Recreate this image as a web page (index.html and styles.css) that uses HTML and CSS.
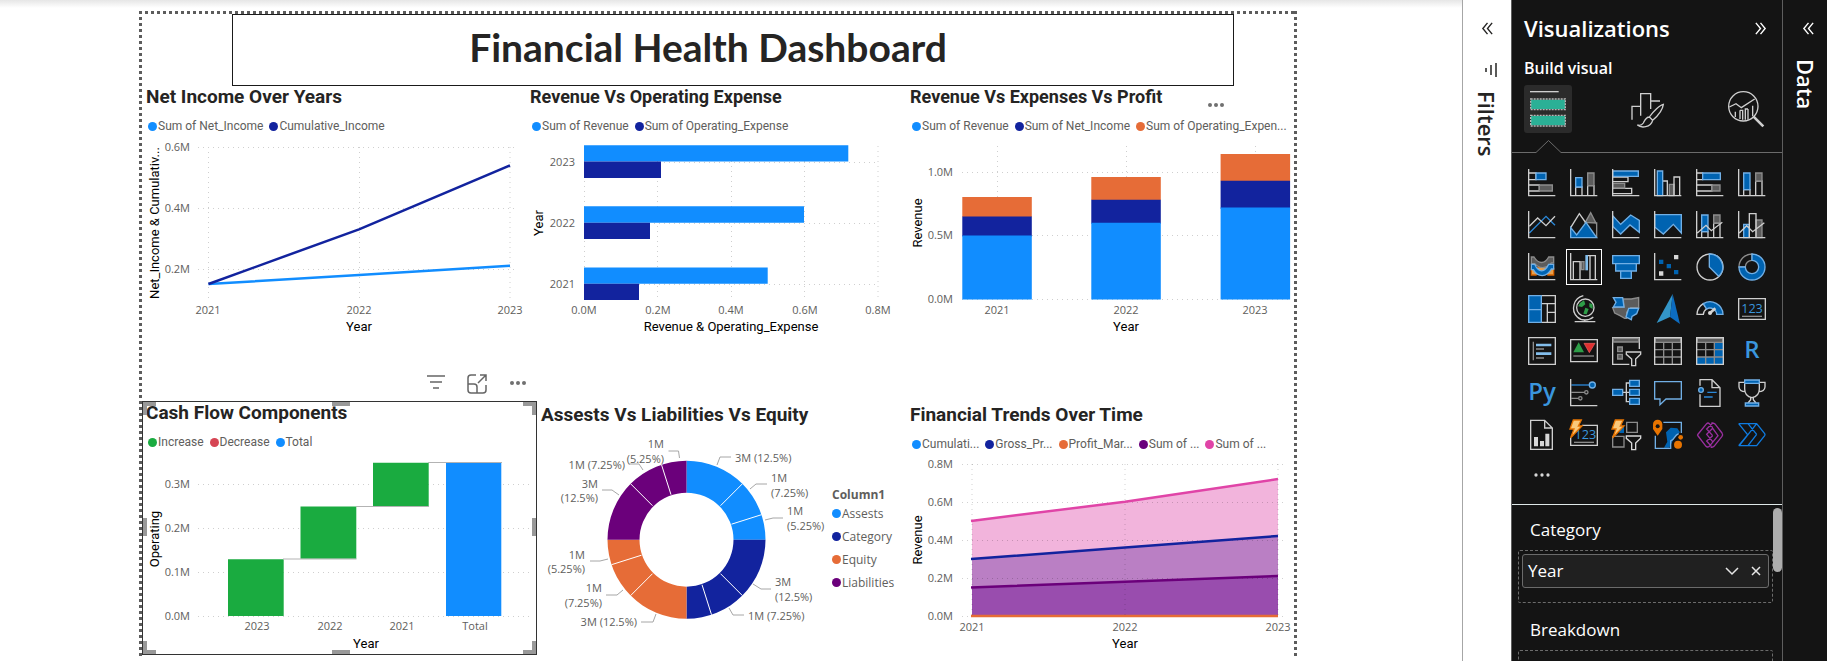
FILE: index.html
```html
<!DOCTYPE html>
<html lang="en">
<head>
<meta charset="utf-8">
<title>Financial Health Dashboard</title>
<link rel="stylesheet" href="styles.css">
</head>
<body>
<div class="app">
  <main class="workspace">
    <div class="report">
      <h1 class="report-title">Financial Health Dashboard</h1>

      <div class="row row-top">
        <section class="visual">
          <h2>Net Income Over Years</h2>
          <ul class="legend">
            <li><i class="dot blue"></i>Sum of Net_Income</li>
            <li><i class="dot navy"></i>Cumulative_Income</li>
          </ul>
          <svg class="chart" viewBox="146 136 380 200" role="img" aria-label="Net income line chart">
            <path class="grid" d="M198 147.5H515M198 208.5H515M198 269.5H515M208.5 147V301M359.5 147V301M510 147V301"/>
            <g class="tick end"><text x="190" y="151">0.6M</text><text x="190" y="212">0.4M</text><text x="190" y="273">0.2M</text></g>
            <g class="tick mid"><text x="208" y="314">2021</text><text x="359" y="314">2022</text><text x="510" y="314">2023</text></g>
            <path class="line s-blue" d="M208.500 284L359 275L510 265.700"/>
            <path class="line s-navy" d="M208.500 284L359 229.300L510 165.500"/>
            <text class="axis" x="359" y="331">Year</text>
            <text class="axis" transform="translate(159 223) rotate(-90)">Net_Income &amp; Cumulativ...</text>
          </svg>
        </section>

        <section class="visual compact">
          <h2>Revenue Vs Operating Expense</h2>
          <ul class="legend">
            <li><i class="dot blue"></i>Sum of Revenue</li>
            <li><i class="dot navy"></i>Sum of Operating_Expense</li>
          </ul>
          <svg class="chart" viewBox="530 136 376 200" role="img" aria-label="Revenue and operating expense bar chart">
            <path class="grid" d="M584 162.500H878M584 223.500H878M584 284.500H878M584.500 146V301M657.500 146V301M731.500 146V301M804.500 146V301M878 146V301"/>
            <g class="f-blue"><path d="M584 145.300H848.300V161.500H584zM584 206.300H804V222.700H584zM584 267.500H767.700V283.700H584z"/></g>
            <g class="f-navy"><path d="M584 161.500H661V178H584zM584 222.700H650V239H584zM584 283.700H639V300H584z"/></g>
            <g class="tick end"><text x="575" y="166">2023</text><text x="575" y="227">2022</text><text x="575" y="288">2021</text></g>
            <g class="tick mid"><text x="584" y="314">0.0M</text><text x="658" y="314">0.2M</text><text x="731" y="314">0.4M</text><text x="805" y="314">0.6M</text><text x="878" y="314">0.8M</text></g>
            <text class="axis" x="731" y="331">Revenue &amp; Operating_Expense</text>
            <text class="axis" transform="translate(543 223) rotate(-90)">Year</text>
          </svg>
        </section>

        <section class="visual compact">
          <h2>Revenue Vs Expenses Vs Profit</h2>
          <button class="more-overlay" aria-label="More options"><svg class="tool" viewBox="0 0 24 24"><g class="tool-dots"><circle cx="6" cy="12" r="2"/><circle cx="12" cy="12" r="2"/><circle cx="18" cy="12" r="2"/></g></svg></button>
          <ul class="legend">
            <li><i class="dot blue"></i>Sum of Revenue</li>
            <li><i class="dot navy"></i>Sum of Net_Income</li>
            <li><i class="dot orange"></i>Sum of Operating_Expen...</li>
          </ul>
          <svg class="chart" viewBox="910 136 384 200" role="img" aria-label="Stacked column chart">
            <path class="grid" d="M962 172.500H1290M962 235.500H1290M962 299.500H1290M997.500 146V300M1126.500 146V300M1255.500 146V300"/>
            <path class="f-orange" d="M962.300 197h69.500v20h-69.500zM1091.300 177h69.500v23h-69.500zM1220.600 154h69.500v27h-69.500z"/>
            <path class="f-navy" d="M962.300 216.500h69.500v20h-69.500zM1091.300 199.700h69.500v24h-69.500zM1220.600 180.700h69.500v28h-69.500z"/>
            <path class="f-blue" d="M962.300 235.500h69.500v64h-69.500zM1091.300 222.700h69.500v76.800h-69.500zM1220.600 207.500h69.500v92h-69.500z"/>
            <g class="tick end"><text x="953" y="176">1.0M</text><text x="953" y="239">0.5M</text><text x="953" y="303">0.0M</text></g>
            <g class="tick mid"><text x="997" y="314">2021</text><text x="1126" y="314">2022</text><text x="1255" y="314">2023</text></g>
            <text class="axis" x="1126" y="331">Year</text>
            <text class="axis" transform="translate(922 223) rotate(-90)">Revenue</text>
          </svg>
        </section>
      </div>

      <div class="visual-tools">
        <button aria-label="Filters on this visual"><svg class="tool" viewBox="0 0 24 24"><path d="M3 4h18M6 10h12M9 16h6"/></svg></button>
        <button aria-label="Focus mode"><svg class="tool" viewBox="0 0 24 24"><path d="M11 3H6a3 3 0 0 0-3 3v12a3 3 0 0 0 3 3h12a3 3 0 0 0 3-3v-5M3 12h6a3 3 0 0 1 3 3v6M13 11l8-8M15 3h6v6"/></svg></button>
        <button aria-label="More options"><svg class="tool" viewBox="0 0 24 24"><g class="tool-dots"><circle cx="6" cy="11" r="2"/><circle cx="12" cy="11" r="2"/><circle cx="18" cy="11" r="2"/></g></svg></button>
      </div>

      <div class="row row-bottom">
        <section class="visual selected">
          <i class="handle tl"></i><i class="handle tm"></i><i class="handle tr"></i>
          <i class="handle ml"></i><i class="handle mr"></i>
          <i class="handle bl"></i><i class="handle bm"></i><i class="handle br"></i>
          <h2>Cash Flow Components</h2>
          <ul class="legend">
            <li><i class="dot green"></i>Increase</li>
            <li><i class="dot red"></i>Decrease</li>
            <li><i class="dot blue"></i>Total</li>
          </ul>
          <svg class="chart" viewBox="146 452 390 202" role="img" aria-label="Cash flow waterfall chart">
            <path class="grid" d="M198 484.500H533M198 528.500H533M198 572.500H533M198 616.500H533"/>
            <path class="f-green" d="M228 559.300h55.700V616H228zM300.500 506.500h55.800v52.300h-55.800zM373 462.700h55.700V506H373z"/>
            <path class="f-blue" d="M446 462.700h55.300V616H446z"/>
            <path class="connector" d="M283 559H356.500M356 506.500H429M428 462.500H502"/>
            <g class="tick end"><text x="190" y="488">0.3M</text><text x="190" y="532">0.2M</text><text x="190" y="576">0.1M</text><text x="190" y="620">0.0M</text></g>
            <g class="tick mid"><text x="257" y="630">2023</text><text x="330" y="630">2022</text><text x="402" y="630">2021</text><text x="475" y="630">Total</text></g>
            <text class="axis" x="366" y="648">Year</text>
            <text class="axis" transform="translate(159 539) rotate(-90)">Operating</text>
          </svg>
        </section>

        <section class="visual lower">
          <h2>Assests Vs Liabilities Vs Equity</h2>
          <div class="donut-body">
            <svg class="chart" viewBox="541 426 290 229" role="img" aria-label="Assets, liabilities and equity donut chart">
              <g class="ring" transform="translate(686.500 539.700)">
                <path class="f-blue" d="M0-79A79 79 0 0 1 79 0H47A47 47 0 0 0 0-47z"/>
                <path class="f-navy" d="M79 0A79 79 0 0 1 0 79V47A47 47 0 0 0 47 0z"/>
                <path class="f-orange" d="M0 79A79 79 0 0 1-79 0H-47A47 47 0 0 0 0 47z"/>
                <path class="f-purple" d="M-79 0A79 79 0 0 1 0-79V-47A47 47 0 0 0-47 0z"/>
                <path class="split" d="M34-34L56-56M45-15.500L75-25M34 34L56 56M15.500 45L25 75M-34 34L-56 56M-45 15.500L-75 25M-34-34L-56-56M-15.500-45L-25-75"/>
              </g>
              <path class="leader" d="M717 465l3-8h11M750 489l6-5h11M765 520l8-2h10M753 584l8 5h10M729 608l4 7h11M656 614l-3 8h-12M623 590l-6 5h-11M608 559l-8 2h-10M619 495l-7-5h-10M643 470l-4-6h-10M679.500 458l-1-7h-10"/>
              <g class="tick">
                <text x="735" y="462">3M (12.5%)</text>
                <text x="771" y="482">1M</text><text x="771" y="497">(7.25%)</text>
                <text x="787" y="515">1M</text><text x="787" y="530">(5.25%)</text>
                <text x="775" y="586">3M</text><text x="775" y="601">(12.5%)</text>
                <text x="748" y="620">1M (7.25%)</text>
              </g>
              <g class="tick end">
                <text x="664" y="448">1M</text><text x="664" y="463">(5.25%)</text>
                <text x="625" y="469">1M (7.25%)</text>
                <text x="598" y="488">3M</text><text x="598" y="502">(12.5%)</text>
                <text x="585" y="559">1M</text><text x="585" y="573">(5.25%)</text>
                <text x="602" y="592">1M</text><text x="602" y="607">(7.25%)</text>
                <text x="637" y="626">3M (12.5%)</text>
              </g>
            </svg>
            <div class="side-legend">
              <h3>Column1</h3>
              <ul>
                <li><i class="dot blue"></i>Assests</li>
                <li><i class="dot navy"></i>Category</li>
                <li><i class="dot orange"></i>Equity</li>
                <li><i class="dot purple"></i>Liabilities</li>
              </ul>
            </div>
          </div>
        </section>

        <section class="visual lower">
          <h2>Financial Trends Over Time</h2>
          <ul class="legend">
            <li><i class="dot blue"></i>Cumulati...</li>
            <li><i class="dot navy"></i>Gross_Pr...</li>
            <li><i class="dot orange"></i>Profit_Mar...</li>
            <li><i class="dot purple"></i>Sum of ...</li>
            <li><i class="dot pink"></i>Sum of ...</li>
          </ul>
          <svg class="chart" viewBox="910 454 384 200" role="img" aria-label="Financial trends area chart">
            <path class="area-pink" d="M972 521L1125 501.700L1278 479V616H972z"/>
            <path class="area-mid" d="M972 559L1125 547.500L1278 536V616H972z"/>
            <path class="area-low" d="M972 587.500L1125 581.700L1278 576V616H972z"/>
            <path class="grid over" d="M962 464.500H1283M962 502.500H1283M962 540.500H1283M962 578.500H1283M962 616.500H1283M972 464V616M1125 464V616M1278 464V616"/>
            <path class="line s-pink" d="M971 521L1125 501.700L1278 479"/>
            <path class="line s-navy" d="M971 559L1125 547.500L1278 536"/>
            <path class="line s-purple" d="M971 587.500L1125 581.700L1278 576"/>
            <path class="line s-orange" d="M971 616H1278"/>
            <g class="tick end"><text x="953" y="468">0.8M</text><text x="953" y="506">0.6M</text><text x="953" y="544">0.4M</text><text x="953" y="582">0.2M</text><text x="953" y="620">0.0M</text></g>
            <g class="tick mid"><text x="972" y="631">2021</text><text x="1125" y="631">2022</text><text x="1278" y="631">2023</text></g>
            <text class="axis" x="1125" y="648">Year</text>
            <text class="axis" transform="translate(922 540) rotate(-90)">Revenue</text>
          </svg>
        </section>
      </div>
    </div>
  </main>

  <aside class="rail filters">
    <button aria-label="Expand filters"><svg class="chev" viewBox="0 0 14 14"><path d="M7 1L2 7l5 6M12 1L7 7l5 6"/></svg></button>
    <svg class="rail-icon" viewBox="0 0 14 14"><path d="M12 0v14M7 2v10M2 5v4"/></svg>
    <h2>Filters</h2>
  </aside>

  <aside class="viz">
    <header class="viz-head">
      <h2>Visualizations</h2>
      <button aria-label="Collapse visualizations"><svg class="chev" viewBox="0 0 14 14"><path d="M2 1l5 6-5 6M7 1l5 6-5 6"/></svg></button>
    </header>
    <h3 class="viz-sub">Build visual</h3>
    <nav class="tabs">
      <button class="tab active" aria-label="Build visual"><svg viewBox="0 0 144 144"><path class="w" d="M18 20H104"/><path class="teal" d="M21 44H123V72H21zM21 93H123V121H21z"/><path class="dash" d="M20 42H124V74H20zM20 91H124V123H20z"/></svg></button>
      <button class="tab" aria-label="Format visual"><svg viewBox="0 0 144 144"><path class="w" d="M27 104V64H53M53 90V26H83V72M83 48H111M53 64V92M83 48V70"/><path class="w" d="M121 58C111 60 91 78 79 96L89 106C105 92 119 74 121 58zM79 96C69 96 65 106 61 114C57 120 49 122 43 120C55 130 83 128 89 106"/></svg></button>
      <button class="tab" aria-label="Add further analyses"><svg viewBox="0 0 144 144"><circle class="w" cx="64" cy="64" r="44"/><path class="w" d="M22 66L42 56L58 68L98 42M40 80V96M54 76V102M54 76H62V104M78 72V104M78 72H70V104M92 62V94"/><path class="w thick" d="M94 94L124 124"/></svg></button>
    </nav>
    <svg class="notch" viewBox="0 0 270 14" preserveAspectRatio="xMinYMin meet"><path d="M0 12.500H24L36.500 0.500L49 12.500H900"/></svg>

    <div class="gallery">
      <button aria-label="Stacked bar chart"><svg viewBox="0 0 84 84"><path class="w" d="M2 12H24V32H2M2 48H34V66H2"/><path class="b" d="M24 12H54V32H24z"/><path class="g" d="M34 48H73V66H34z"/><path class="w" d="M2 0V80H82"/></svg></button>
      <button aria-label="Stacked column chart"><svg viewBox="0 0 84 84"><path class="w" d="M17 80V54H36V80M53 80V50H72V80"/><path class="b" d="M17 26H36V54H17z"/><path class="g" d="M53 12H72V50H53z"/><path class="w" d="M2 0V80H82"/></svg></button>
      <button aria-label="Clustered bar chart"><svg viewBox="0 0 84 84"><path class="w" d="M2 24H48V38H2M2 58H59V74H2"/><path class="g" d="M2 43H38V57H2z"/><path class="b" d="M2 6H79V22H2z"/><path class="w" d="M2 0V80H82"/></svg></button>
      <button aria-label="Clustered column chart"><svg viewBox="0 0 84 84"><path class="g" d="M46 46H60V80H46z"/><path class="w" d="M26 36H40V80M60 80V24H77V80"/><path class="b" d="M10 6H26V80H10z"/><path class="w" d="M2 0V80H82"/></svg></button>
      <button aria-label="100% stacked bar chart"><svg viewBox="0 0 84 84"><path class="w" d="M2 12H20V32H2M2 48H48V66H2"/><path class="b" d="M20 12H73V32H20z"/><path class="g" d="M48 48H72V66H48z"/><path class="w" d="M2 0V80H82"/></svg></button>
      <button aria-label="100% stacked column chart"><svg viewBox="0 0 84 84"><path class="w" d="M17 80V62H36V80M53 80V36H72V80"/><path class="b" d="M17 12H36V62H17z"/><path class="g" d="M53 12H72V36H53z"/><path class="w" d="M2 0V80H82"/></svg></button>

      <button aria-label="Line chart"><svg viewBox="0 0 84 84"><path class="bl" d="M4 66L54 16L81 43"/><path class="w" d="M4 46L29 21L54 44L81 16"/><path class="w" d="M2 0V80H82"/></svg></button>
      <button aria-label="Area chart"><svg viewBox="0 0 84 84"><path class="g" d="M46 34L62 5L80 40V80V50 36z"/><path class="w" d="M2 50L28 8L48 36"/><path class="b" d="M2 80V50L20 72L48 34L80 80z"/></svg></button>
      <button aria-label="Stacked area chart"><svg viewBox="0 0 84 84"><path class="b" d="M2 14L26 40L56 12L82 28V64L54 42L26 69L2 46z"/><path class="w" d="M2 0V80H82"/></svg></button>
      <button aria-label="100% stacked area chart"><svg viewBox="0 0 84 84"><path class="b" d="M2 11H82V66L58 40L28 69L2 48z"/><path class="w" d="M2 0V80H82"/></svg></button>
      <button aria-label="Line and stacked column chart"><svg viewBox="0 0 84 84"><path class="w" d="M17 80V62H36V80M53 80V36H72V80"/><path class="b" d="M17 12H36V62H17z"/><path class="g" d="M53 12H72V36H53z"/><path class="w" d="M2 0V80H82M4 66L30 43L46 59L79 34"/></svg></button>
      <button aria-label="Line and clustered column chart"><svg viewBox="0 0 84 84"><path class="b" d="M17 40H34V80H17z"/><path class="g" d="M54 27H72V80H54z"/><path class="w" d="M34 80V8H54V80M2 0V80H82M4 66L26 44L44 62L79 35"/></svg></button>

      <button aria-label="Ribbon chart"><svg viewBox="0 0 84 84"><path class="o" d="M10 46H24C34 38 52 38 60 46H77V66H60C50 56 34 56 24 66H10z"/><path class="g" d="M10 12H18C32 34 50 34 62 12H77V30H70C54 50 32 46 20 32H10z"/><path class="b" d="M10 34H20C32 60 50 60 62 34H77V48H70C56 74 30 74 16 50H10z"/><path class="w" d="M2 0V80H82"/></svg></button>
      <button class="picked" aria-label="Waterfall chart" aria-pressed="true"><svg viewBox="0 0 84 84"><path class="g" d="M34 26H42V50H34z"/><path class="w" d="M10 80V26H30V80M60 80V8H76V80"/><path class="lb" d="M46 6H54V52H46z"/><path class="w" d="M2 0V80H82M54 8H60"/></svg></button>
      <button aria-label="Funnel"><svg viewBox="0 0 84 84"><path class="b" d="M2 8H82V32H2zM11 32H73V54H11zM26 54H58V76H26z"/></svg></button>
      <button aria-label="Scatter chart"><svg viewBox="0 0 84 84"><path class="ws" d="M60 6h13v13H60zM15 55h13v13H15z"/><path class="bs" d="M15 20h13v13H15zM38 33h13v13H38zM60 51h13v13H60z"/><path class="w" d="M2 0V80H82"/></svg></button>
      <button aria-label="Pie chart"><svg viewBox="0 0 84 84"><circle class="w" cx="42" cy="42" r="39"/><path class="b" d="M40 42V3A39 39 0 0 1 68 70z"/></svg></button>
      <button aria-label="Donut chart"><svg viewBox="0 0 84 84"><path class="gl" d="M3 42A39 39 0 0 1 42 3V22A20 20 0 0 0 22 42z"/><path class="b" d="M42 3A39 39 0 1 1 3 42H22A20 20 0 1 0 42 22z"/></svg></button>

      <button aria-label="Treemap"><svg viewBox="0 0 84 84"><path class="w" d="M40 2H82V82H40zM40 26H82M58 26V82M58 52H82"/><path class="b" d="M2 2H40V44H2zM2 44H40V82H2z"/></svg></button>
      <button aria-label="Map"><svg viewBox="0 0 84 84"><path class="gr" d="M30 24L42 16L46 28L36 36L24 34zM46 38L56 42L50 58L40 56zM58 24L68 28V42L58 36z"/><circle class="w" cx="46" cy="38" r="26"/><path class="w" d="M40 2A38 38 0 0 0 22 66C34 78 56 78 70 66M44 74V80M14 80H76"/></svg></button>
      <button aria-label="Filled map"><svg viewBox="0 0 84 84"><path class="g" d="M34 12H58L80 8V38H56L44 52V70H38L24 62L8 54L2 38L36 36z"/><path class="b" d="M4 8H32L36 36H4L12 22zM50 40H80L74 56L60 64L58 74L42 66z"/></svg></button>
      <button aria-label="Azure map"><svg viewBox="0 0 84 84"><path class="az1" d="M56-3L8 84L48 66z"/><path class="az2" d="M56-3L78 87L48 66z"/></svg></button>
      <button aria-label="Gauge"><svg viewBox="0 0 84 84"><path class="w" d="M3 58A39 39 0 0 1 22 26L32 42A20 20 0 0 0 22 58z"/><path class="b" d="M22 26A39 39 0 0 1 81 58H62A20 20 0 0 0 32 42z"/><path class="w thick" d="M42 54L58 40"/><circle class="ws" cx="42" cy="54" r="6"/></svg></button>
      <button aria-label="Card"><svg viewBox="0 0 84 84"><path class="w" d="M2 11H82V73H2z"/><path class="gl" d="M12 64H72"/><text class="n" x="42" y="54">123</text></svg></button>

      <button aria-label="Multi-row card"><svg viewBox="0 0 84 84"><path class="w" d="M2 2H82V82H2z"/><path class="gl" d="M16 14V70M24 36H48M24 63H48"/><path class="lb" d="M24 20H70V28H24zM24 46H70V54H24z"/></svg></button>
      <button aria-label="KPI"><svg viewBox="0 0 84 84"><path class="w" d="M2 8H82V74H2z"/><path class="gr" d="M10 46L26 16L42 46z"/><path class="rd" d="M42 19H75L58 47z"/><path class="gl" d="M10 57H72"/></svg></button>
      <button aria-label="Slicer"><svg viewBox="0 0 84 84"><path class="w" d="M52 82H2V2H82V36"/><path class="g" d="M4 4H80V15H4zM17 30H31V44H17zM17 52H31V66H17z"/><path class="w" d="M43 45H86V52L71 66V86H59V66L43 52z"/></svg></button>
      <button aria-label="Table"><svg viewBox="0 0 84 84"><path class="g" d="M4 4H80V16H4z"/><path class="gl" d="M2 38H82M2 60H82M29 16V82M55 16V82"/><path class="w" d="M2 2H82V82H2z"/></svg></button>
      <button aria-label="Matrix"><svg viewBox="0 0 84 84"><path class="g" d="M4 4H80V16H4z"/><path class="bs" d="M55 18H82V82H2V60H55z"/><path class="gl" d="M2 38H82M2 60H82M29 16V82M55 16V82"/><path class="w" d="M2 2H82V82H2z"/></svg></button>
      <button class="word" aria-label="R script visual">R</button>

      <button class="word" aria-label="Python visual">Py</button>
      <button aria-label="Key influencers"><svg viewBox="0 0 84 84"><path class="bl" d="M4 18H58"/><circle class="b" cx="67" cy="18" r="9"/><path class="gl" d="M4 40H44M4 58H25"/><circle class="gl" cx="49" cy="40" r="5"/><circle class="gl" cx="31" cy="58" r="5"/><path class="w" d="M2 0V80H82"/></svg></button>
      <button aria-label="Decomposition tree"><svg viewBox="0 0 84 84"><path class="w" d="M32 40H54M54 12H43V68H54"/><path class="b" d="M2 31H32V49H2zM53 4H82V22H53zM53 31H82V49H53zM53 58H82V76H53z"/></svg></button>
      <button aria-label="Q&amp;A"><svg viewBox="0 0 84 84"><path class="lbl" d="M2 8H82V60H36L18 77V60H2z"/></svg></button>
      <button aria-label="Narrative"><svg viewBox="0 0 84 84"><path class="w" d="M12 20V2H48L72 26V82H12V46M48 2V26H72"/><circle class="b" cx="15" cy="33" r="7"/><path class="bl" d="M34 40H62M24 54H50"/></svg></button>
      <button aria-label="Goals"><svg viewBox="0 0 84 84"><path class="w" d="M20 8V30C20 48 32 54 42 56C52 54 64 48 64 30V8M20 10H3V24C4 34 12 38 22 38M64 10H81V24C80 34 72 38 62 38M38 56V62L30 72M46 56V62L54 72"/><path class="b" d="M20 3H64V13H20zM22 72H62V81H22z"/></svg></button>

      <button aria-label="Paginated report"><svg viewBox="0 0 84 84"><path class="w" d="M8-2H50L73 21V85H8zM50-2V21H73"/><path class="ws" d="M18 48H30V76H18zM36 60H48V76H36zM52 38H64V76H52z"/></svg></button>
      <button aria-label="New card"><svg viewBox="0 0 84 84"><path class="w" d="M36 13H82V73H2V50"/><path class="gl" d="M12 64H72"/><text class="n" x="46" y="54">123</text><path class="bolt" d="M10-3H34L25 15H36L2 50L12 24H0z"/></svg></button>
      <button aria-label="New slicer"><svg viewBox="0 0 84 84"><path class="gl" d="M44 4H76V34H44zM2 46H36V78H2z"/><path class="bs" d="M22 14H36V36H22z"/><path class="bolt" d="M10-3H34L25 15H36L2 50L12 24H0z"/><path class="cut" d="M43 45H86V52L71 66V86H59V66L43 52z"/></svg></button>
      <button aria-label="ArcGIS map"><svg viewBox="0 0 84 84"><path class="bs" d="M36 34L50 20L70 22L78 34L64 46L56 60L46 80H30L40 62z"/><path class="lbl" d="M28 4H82V36M4 44V82H52M74 38C60 44 62 56 50 60V80"/><path class="os" d="M11-4A14 14 0 0 1 25 10V24L11 44L-3 24V10A14 14 0 0 1 11-4z"/><circle class="hole" cx="11" cy="16" r="6"/><circle class="os" cx="72" cy="71" r="12"/><circle class="os" cx="80" cy="49" r="7"/></svg></button>
      <button aria-label="Power Apps"><svg viewBox="0 0 84 84"><path class="pu" d="M4 42L32 8Q36 4 40 8L50 20M4 42L30 76Q34 80 40 76L66 44L50 22L32 40L50 62M50 6L32 24L50 44M46 6H50Q54 6 58 10L78 36Q82 42 78 46L54 76Q50 80 44 78M50 44L32 60L46 76"/></svg></button>
      <button aria-label="Power Automate"><svg viewBox="0 0 84 84"><path class="pa" d="M2 8H56L80 38Q82 41 80 44L56 74H4L56 8M2 8L28 40M2 74L30 40M30 74L56 40M30 8L56 40"/></svg></button>
      <button aria-label="Get more visuals"><svg viewBox="0 0 84 84"><g class="ws"><circle cx="24" cy="36" r="5"/><circle cx="42" cy="36" r="5"/><circle cx="60" cy="36" r="5"/></g></svg></button>
    </div>

    <div class="wells">
      <h4>Category</h4>
      <div class="well">
        <div class="field">
          <span>Year</span>
          <button aria-label="Field options"><svg viewBox="0 0 14 14"><path d="M1 4l6 6 6-6"/></svg></button>
          <button aria-label="Remove field"><svg viewBox="0 0 14 14"><path d="M3 3l8 8M11 3l-8 8"/></svg></button>
        </div>
      </div>
      <h4>Breakdown</h4>
      <div class="well"></div>
      <div class="thumb"></div>
    </div>
  </aside>

  <aside class="rail data">
    <button aria-label="Expand data"><svg class="chev" viewBox="0 0 14 14"><path d="M7 1L2 7l5 6M12 1L7 7l5 6"/></svg></button>
    <h2>Data</h2>
  </aside>
</div>
</body>
</html>
```
FILE: styles.css
```css
* { box-sizing: border-box; }
body { margin: 0; font-family: "Open Sans", "Noto Sans", sans-serif; background: #fff; color: #252423; }
h1, h2, h3, h4, ul { margin: 0; padding: 0; }
ul { list-style: none; }
button { background: none; border: 0; padding: 0; margin: 0; color: inherit; font: inherit; display: flex; align-items: center; justify-content: center; }
svg { display: block; overflow: visible; }

.app { display: flex; height: 100vh; overflow: hidden; }
.workspace { flex: 1; min-width: 0; padding: 11px 165px 0 139px; background: linear-gradient(#e6e6e6, #fff 8px); }

/* Report page, outlined with square dots */
.report {
  padding: 3px 3px 2px;
  background:
    repeating-linear-gradient(90deg, #5c5c5c 0 3px, transparent 3px 6px) top / 100% 3px no-repeat,
    repeating-linear-gradient(#5c5c5c 0 3px, transparent 3px 6px) left / 3px 100% no-repeat,
    repeating-linear-gradient(#5c5c5c 0 3px, transparent 3px 6px) right / 3px 100% no-repeat;
}
.report-title { margin: 0 60px 0 90px; border: 1px solid #1a1a1a; font: 700 39px/56px Lato, sans-serif; padding: 4px 50px 10px 0; text-align: center; }
.row { display: grid; }
.row-top { grid-template-columns: 384fr 380fr 388fr; }
.row-bottom { grid-template-columns: 395fr 369fr 388fr; }

.visual { position: relative; padding-left: 4px; min-width: 0; }
.visual.lower { padding-top: 3px; }
.visual h2 { font: 700 19px/22px Roboto, sans-serif; white-space: nowrap; }
.visual.compact h2 { font-size: 18px; }
.legend { display: flex; gap: 6px; height: 20px; margin-top: 8px; padding-left: 2px; font: 12px/20px Roboto, sans-serif; color: #605e5c; white-space: nowrap; }
.legend li, .side-legend li { display: flex; align-items: center; gap: 1px; }
.dot { width: 9px; height: 9px; border-radius: 50%; flex: none; }
.dot.blue { background: #118dff; }
.dot.navy { background: #12239e; }
.dot.orange { background: #e66c37; }
.dot.purple { background: #6b007b; }
.dot.pink { background: #e044a7; }
.dot.green { background: #1aab40; }
.dot.red { background: #d64554; }

.chart { width: 100%; height: auto; }
.grid { stroke: #cfcfcf; stroke-dasharray: 1 4; fill: none; }
.grid.over { stroke: #000; stroke-opacity: 0.18; }
.tick { font-size: 11px; fill: #605e5c; }
.mid, .axis { text-anchor: middle; }
.end { text-anchor: end; }
.axis { font: 13px Roboto, sans-serif; fill: #000; }
.line { fill: none; stroke-width: 2.5; stroke-linejoin: round; }
.s-blue { stroke: #118dff; }
.s-navy { stroke: #12239e; }
.s-orange { stroke: #e66c37; }
.s-purple { stroke: #6b007b; }
.s-pink { stroke: #e044a7; }
.f-blue { fill: #118dff; }
.f-navy { fill: #12239e; }
.f-orange { fill: #e66c37; }
.f-purple { fill: #6b007b; }
.f-green { fill: #1aab40; }
.area-pink { fill: #f2b4dc; }
.area-mid { fill: #ba7fc4; }
.area-low { fill: #994dae; }
.connector { stroke: #b3b3b3; }
.split { stroke: #fff; stroke-width: 1; }
.leader { fill: none; stroke: #a6a6a6; }

.donut-body { display: grid; grid-template-columns: 290fr 75fr; }
.side-legend { padding: 59px 0 0 1px; color: #605e5c; font-size: 12px; }
.side-legend h3 { font-size: 12px; line-height: 20px; }
.side-legend li { line-height: 23px; height: 23px; }
.side-legend ul { margin-top: -3px; }

.visual-tools { display: flex; justify-content: flex-end; gap: 17px; width: 34%; height: 65px; padding: 36px 4px 0 0; }
.visual-tools button, .more-overlay { width: 24px; height: 24px; }
.tool { width: 24px; height: 24px; fill: none; stroke: #666; stroke-width: 1.5; }
.tool-dots { fill: #707070; stroke: none; }
.more-overlay { position: absolute; right: 66px; top: 7px; }

.selected { padding: 1px 1px 1px 4px; }
.selected::after { content: ""; position: absolute; inset: 0; border: 1px solid #333; pointer-events: none; }
.handle { position: absolute; border: 0 solid #999; }
.tl, .tr, .bl, .br { width: 14px; height: 14px; }
.tl { left: 0; top: 0; border-width: 5px 0 0 5px; }
.tr { right: 0; top: 0; border-width: 5px 5px 0 0; }
.bl { left: 0; bottom: 0; border-width: 0 0 5px 5px; }
.br { right: 0; bottom: 0; border-width: 0 5px 5px 0; }
.tm, .bm { width: 18px; height: 5px; left: 48%; background: #999; }
.tm { top: 0; }
.bm { bottom: 0; }
.ml, .mr { width: 5px; height: 18px; top: 46%; background: #999; }
.ml { left: 0; }
.mr { right: 0; }

.rail { display: flex; flex-direction: column; align-items: center; padding-top: 18px; }
.rail button { height: 20px; }
.rail h2 { writing-mode: vertical-rl; font-size: 22px; line-height: 24px; font-weight: 600; }
.chev { width: 13px; height: 13px; fill: none; stroke: currentColor; stroke-width: 1.5; }
.filters { width: 49px; background: #fff; border-left: 1px solid #a6a6a6; }
.filters .rail-icon { width: 14px; height: 14px; margin: 25px 0 14px 8px; fill: none; stroke: #252423; stroke-width: 1.5; }
.data { width: 44px; background: #141414; color: #fff; padding-left: 6px; }
.data h2 { margin: 21px 4px 0 0; }

.viz { position: relative; width: 272px; display: flex; flex-direction: column; background: #141414; color: #fff; border: solid #5e5e5e; border-width: 0 1px; }
.viz-head { display: flex; align-items: center; justify-content: space-between; padding: 12px 15px 0 12px; height: 44px; }
.viz-head h2 { font-size: 22px; line-height: 32px; font-weight: 600; }
.viz-sub { margin: 0; font-size: 16px; line-height: 24px; font-weight: 600; padding: 12px 12px 0; }
.tabs { display: flex; justify-content: space-between; padding: 5px 12px 7px; }
.tab { width: 48px; height: 48px; border-radius: 3px; }
.tab svg { width: 48px; height: 48px; }
.tab.active { background: #2b2b2b; }
.notch { width: 100%; height: 14px; overflow: hidden; fill: none; stroke: #6b6b6b; }
.teal { fill: #2bb096; }
.dash { fill: none; stroke: #b8b8b8; stroke-width: 4; stroke-dasharray: 6 3; }

.gallery { display: grid; grid-template-columns: repeat(6, 42px); padding: 8px 9px 6px; flex: none; }
.gallery button { height: 42px; }
.gallery svg { width: 28px; height: 28px; }
.picked svg { outline: 1px solid #fff; outline-offset: 3px; }
.viz svg .w, .viz svg .gl, .viz svg .bl, .viz svg .lbl { fill: none; stroke: #cfcfcf; stroke-width: 4; }
.viz svg .gl { stroke: #8c8c8c; }
.viz svg .bl { stroke: #2b88d8; }
.viz svg .lbl { stroke: #71afe5; }
.viz svg .thick { stroke-width: 8; }
.b { fill: #0063b1; stroke: #71afe5; stroke-width: 4; }
.g { fill: #5c5c5c; stroke: #8c8c8c; stroke-width: 4; }
.o { fill: #e8a04c; stroke: #d86400; stroke-width: 4; }
.bs { fill: #0063b1; }
.ws { fill: #d8d8d8; }
.os { fill: #e87400; }
.lb { fill: #83beec; }
.gr { fill: #2e9e48; }
.rd { fill: #e03030; stroke: #f06060; stroke-width: 2; }
.az1 { fill: #3396c8; }
.az2 { fill: #0d6cc0; }
.bolt { fill: #fbc87a; stroke: #e87400; stroke-width: 4; }
.cut { fill: #141414; stroke: #d8d8d8; stroke-width: 4; }
.hole { fill: #141414; }
.pu { fill: none; stroke: #9a2fa0; stroke-width: 4; }
.pa { fill: none; stroke: #0f7be0; stroke-width: 4; stroke-linejoin: round; }
.n { fill: #3a96dd; font-size: 38px; text-anchor: middle; }
.gallery .word { color: #3a96dd; font-size: 24px; line-height: 28px; font-weight: 600; padding-bottom: 4px; }

.wells { position: relative; flex: 1; min-height: 0; overflow: hidden; border-top: 1px solid #dfe8e8; padding-left: 6px; padding-right: 9px; }
.wells h4 { font-size: 17px; line-height: 28px; font-weight: 400; padding: 11px 12px 6px; }
.well { height: 53px; border: 1px dashed #6b6b6b; border-radius: 2px; padding: 3px; }
.well + h4 { padding-top: 13px; }
.field { display: flex; align-items: center; gap: 10px; height: 34px; background: #202020; border: 1px solid #6b6b6b; border-radius: 3px; padding: 0 5px; font-size: 17px; line-height: 24px; }
.field span { flex: 1; }
.field svg { width: 14px; height: 14px; fill: none; stroke: #e6e6e6; stroke-width: 1.5; }
.thumb { position: absolute; right: 0; top: 3px; width: 9px; height: 64px; border-radius: 5px; background: #adadad; }
```
